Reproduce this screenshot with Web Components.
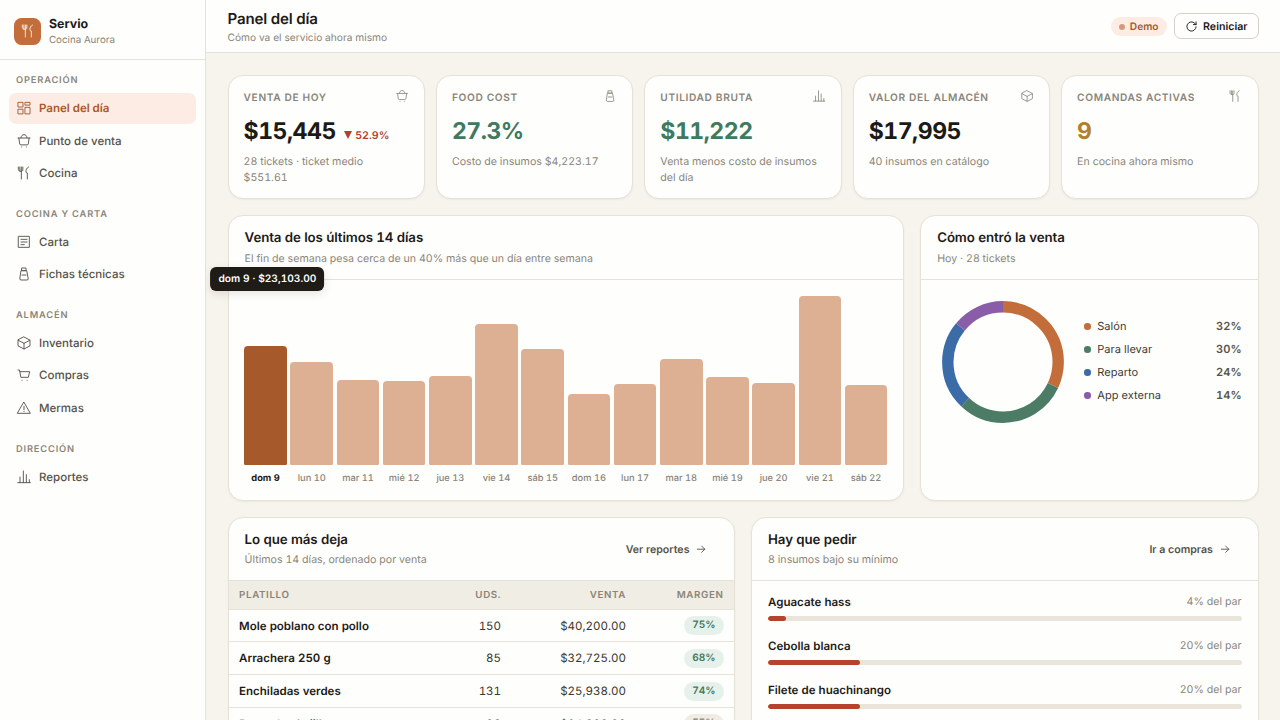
<!DOCTYPE html>
<html lang="es">
<head>
<meta charset="utf-8">
<title>Servio · Panel del día</title>
<style>
  html, body {
    margin: 0;
    height: 100%;
    overflow: hidden;
  }

  body {
    font-family: Inter, "Liberation Sans", sans-serif;
    text-rendering: geometricPrecision;
    --ink: #1c1a17;
    --ink-2: #57534a;
    --muted: #8a8579;
    --line: #e6e2d9;
    --bg: #f7f4ed;
    --card: #fefefd;
    --accent: #c26d3a;
    --accent-dark: #a8582b;
    --accent-soft: #fcece4;
    --green: #3f7a5f;
    --red: #b3402d;
    --gold: #b28028;
    color: var(--ink);
    background: var(--bg);
  }
</style>
</head>
<body>

<app-shell>
  <side-bar slot="side" name="Servio" place="Cocina Aurora">
    <nav-group label="Operación">
      <nav-item icon="grid" active>Panel del día</nav-item>
      <nav-item icon="basket">Punto de venta</nav-item>
      <nav-item icon="fork">Cocina</nav-item>
    </nav-group>
    <nav-group label="Cocina y carta">
      <nav-item icon="menu">Carta</nav-item>
      <nav-item icon="jar">Fichas técnicas</nav-item>
    </nav-group>
    <nav-group label="Almacén">
      <nav-item icon="box">Inventario</nav-item>
      <nav-item icon="cart">Compras</nav-item>
      <nav-item icon="alert">Mermas</nav-item>
    </nav-group>
    <nav-group label="Dirección">
      <nav-item icon="chart">Reportes</nav-item>
    </nav-group>
  </side-bar>

  <top-bar slot="top" heading="Panel del día" sub="Cómo va el servicio ahora mismo"></top-bar>

  <kpi-card slot="kpis" label="Venta de hoy" icon="basket" value="$15,445" delta="52.9%">28 tickets · ticket medio $551.61</kpi-card>
  <kpi-card slot="kpis" label="Food cost" icon="jar" value="27.3%" tone="green">Costo de insumos $4,223.17</kpi-card>
  <kpi-card slot="kpis" label="Utilidad bruta" icon="chart" value="$11,222" tone="green">Venta menos costo de insumos del día</kpi-card>
  <kpi-card slot="kpis" label="Valor del almacén" icon="box" value="$17,995">40 insumos en catálogo</kpi-card>
  <kpi-card slot="kpis" label="Comandas activas" icon="fork" value="9" tone="gold">En cocina ahora mismo</kpi-card>

  <panel-card slot="charts" heading="Venta de los últimos 14 días" sub="El fin de semana pesa cerca de un 40% más que un día entre semana">
    <bar-chart></bar-chart>
  </panel-card>
  <panel-card slot="charts" heading="Cómo entró la venta" sub="Hoy · 28 tickets">
    <donut-chart></donut-chart>
  </panel-card>

  <panel-card slot="lists" heading="Lo que más deja" sub="Últimos 14 días, ordenado por venta" action="Ver reportes" compact>
    <dish-table></dish-table>
  </panel-card>
  <panel-card slot="lists" heading="Hay que pedir" sub="8 insumos bajo su mínimo" action="Ir a compras" compact>
    <stock-list>
      <stock-item name="Aguacate hass" pct="4" fill="3.8"></stock-item>
      <stock-item name="Cebolla blanca" pct="20" fill="19.5"></stock-item>
      <stock-item name="Filete de huachinango" pct="20" fill="19.5"></stock-item>
    </stock-list>
  </panel-card>
</app-shell>

<script>
// attach an open shadow root from a markup string
function render(el, html) {
  const template = document.createElement('template');
  template.innerHTML = html;
  el.attachShadow({ mode: 'open' });
  el.shadowRoot.appendChild(template.content.cloneNode(true));
}

const ICONS = {
  grid: '<rect x="3.5" y="3.5" width="7" height="7"/><rect x="3.5" y="13.8" width="7" height="7"/><rect x="14" y="3.5" width="7" height="4.2"/><rect x="14" y="11" width="7" height="9.8"/>',
  basket: '<path d="M3 7.500h18M4.300 7.500l1.200 8.800a1.800 1.800 0 0 0 1.800 1.500h9.400a1.800 1.800 0 0 0 1.800-1.500l1.200-8.800M7.500 7.200C7.800 4.200 9.500 2.500 12 2.500s4.200 1.700 4.500 4.700"/><path d="M8.500 21h.1M15.500 21h.1"/>',
  fork: '<path d="M3.500 3v3.500c0 2 1.200 3 4.300 3M5.800 3v6M8 3v18M10.200 3v4.500c0 1.300-.8 2-2.200 2M18.800 3c-3 1.500-4.200 4.500-3.800 7.500.1 1 .8 1.500 2 1.500V21"/>',
  menu: '<rect x="4" y="3.500" width="16" height="16.500"/><path d="M7.500 8h9M7.500 12h9M7.500 16h5"/>',
  jar: '<path d="M9 3h6v4H9zM8 7h8l2.300 11.500a2 2 0 0 1-2 2.500H7.700a2 2 0 0 1-2-2.500zM9 13.500h6"/>',
  box: '<path d="M12 3l9 4.700v8.600L12 21l-9-4.700V7.700zM3.300 7.900L12 12.500l8.700-4.600M12 12.500V21"/>',
  cart: '<path d="M3 4.500h2.300l2 11h11.200L20.500 7H6"/><path d="M9 20h.1M16.500 20h.1"/>',
  alert: '<path d="M12 3.500L21.500 20h-19zM12 9.500v5M12 17v.3"/>',
  chart: '<path d="M2.500 20.500h19M6 20.500V12M11 20.500V3M15.500 20.500V8.500M20 20.500V16"/>',
  refresh: '<path d="M20.500 12.500a8.500 8.500 0 1 1-2.500-6.500L20.500 8.500M20.500 3.500v5h-5"/>',
  arrow: '<path d="M4.500 12h14.500M13 6l6 6-6 6"/>'
};

class UiIcon extends HTMLElement {
  constructor() {
    super();
    render(this, `
      <style>
        :host { display: inline-flex; flex: none; width: 16px; height: 16px; }
        svg {
          width: 100%;
          height: 100%;
          fill: none;
          stroke: currentColor;
          stroke-width: var(--icon-stroke, 1.4);
          stroke-linecap: round;
          stroke-linejoin: round;
        }
      </style>
      <svg viewBox="0 0 24 24">${ICONS[this.getAttribute('name')] || ''}</svg>
    `);
  }
}

class AppShell extends HTMLElement {
  constructor() {
    super();
    render(this, `
      <style>
        :host { display: flex; height: 100%; }
        .page { flex: 1; min-width: 0; display: flex; flex-direction: column; }
        main {
          flex: 1;
          min-height: 0;
          overflow: hidden;
          padding: 22px 21.500px 0 21.600px;
          display: flex;
          flex-direction: column;
          gap: 16.400px;
        }
        .kpis { display: grid; grid-template-columns: repeat(5, 1fr); gap: 11px; height: 124px; flex: none; }
        .charts { display: grid; grid-template-columns: 2fr 1fr; gap: 16px; height: 285.500px; flex: none; }
        .lists { display: grid; grid-template-columns: 1fr 1fr; gap: 16px; height: 320px; flex: none; }
      </style>
      <slot name="side"></slot>
      <div class="page">
        <slot name="top"></slot>
        <main>
          <div class="kpis"><slot name="kpis"></slot></div>
          <div class="charts"><slot name="charts"></slot></div>
          <div class="lists"><slot name="lists"></slot></div>
        </main>
      </div>
    `);
  }
}

class SideBar extends HTMLElement {
  constructor() {
    super();
    render(this, `
      <style>
        :host {
          display: flex;
          flex-direction: column;
          flex: none;
          box-sizing: border-box;
          width: 206px;
          background: var(--card);
          border-right: 1px solid var(--line);
        }
        .brand {
          display: flex;
          align-items: center;
          gap: 8px;
          box-sizing: border-box;
          height: 59.500px;
          padding: 4px 14px 0;
          border-bottom: 1px solid var(--line);
        }
        .logo {
          display: flex;
          align-items: center;
          justify-content: center;
          width: 27px;
          height: 27px;
          border-radius: 7.500px;
          color: #fbeee6;
          background: var(--accent);
        }
        .name { margin-top: 2px; font-size: 12.400px; font-weight: 700; line-height: 16px; }
        .place { margin-top: 1px; font-size: 9.750px; line-height: 16px; color: var(--muted); }
        nav { padding: 12.500px 9px 0; }
      </style>
      <div class="brand">
        <div class="logo"><ui-icon name="fork"></ui-icon></div>
        <div>
          <div class="name">${this.getAttribute('name')}</div>
          <div class="place">${this.getAttribute('place')}</div>
        </div>
      </div>
      <nav><slot></slot></nav>
    `);
  }
}

class NavGroup extends HTMLElement {
  constructor() {
    super();
    render(this, `
      <style>
        :host { display: flex; flex-direction: column; gap: 1.200px; margin-bottom: 16.800px; }
        .label {
          padding: 1.200px 7px 2.200px;
          font-size: 9.300px;
          font-weight: 600;
          line-height: 16px;
          letter-spacing: 0.09em;
          text-transform: uppercase;
          color: var(--muted);
        }
      </style>
      <div class="label">${this.getAttribute('label')}</div>
      <slot></slot>
    `);
  }
}

class NavItem extends HTMLElement {
  constructor() {
    super();
    render(this, `
      <style>
        :host {
          display: flex;
          align-items: center;
          gap: 7px;
          height: 31.300px;
          padding: 0 7px;
          border-radius: 7px;
          font-size: 11.520px;
          font-weight: 500;
          color: var(--ink-2);
        }
        :host([active]) { color: var(--accent-dark); background: var(--accent-soft); font-weight: 600; }
      </style>
      <ui-icon name="${this.getAttribute('icon')}"></ui-icon>
      <span><slot></slot></span>
    `);
  }
}

class TopBar extends HTMLElement {
  constructor() {
    super();
    render(this, `
      <style>
        :host {
          display: flex;
          align-items: center;
          flex: none;
          box-sizing: border-box;
          height: 53px;
          padding: 0 21.500px;
          background: var(--card);
          border-bottom: 1px solid var(--line);
        }
        .titles { flex: 1; }
        .heading { margin-top: 2px; font-size: 15.070px; font-weight: 600; line-height: 20px; letter-spacing: -0.01em; }
        .sub { font-size: 10.190px; line-height: 16px; margin-top: 1px; color: var(--muted); }
        .pill {
          display: flex;
          align-items: center;
          gap: 5px;
          box-sizing: border-box;
          height: 19.500px;
          margin-top: 0.500px;
          padding: 0.500px 8px 0;
          border-radius: 10px;
          font-size: 10.190px;
          font-weight: 600;
          color: var(--accent-dark);
          background: var(--accent-soft);
        }
        .dot { width: 6px; height: 6px; border-radius: 50%; background: #d49a7c; }
        button {
          display: flex;
          align-items: center;
          gap: 5.500px;
          box-sizing: border-box;
          height: 26px;
          margin: 0 0 0 7.500px;
          padding: 1px 10px 0 9.500px;
          border: 1px solid #d6d1c6;
          border-radius: 7px;
          font: 600 10.630px Inter, sans-serif;
          text-rendering: inherit;
          color: var(--ink);
          background: var(--card);
        }
        button ui-icon { width: 13px; height: 13px; --icon-stroke: 1.700; }
      </style>
      <div class="titles">
        <div class="heading">${this.getAttribute('heading')}</div>
        <div class="sub">${this.getAttribute('sub')}</div>
      </div>
      <div class="pill"><span class="dot"></span>Demo</div>
      <button><ui-icon name="refresh"></ui-icon>Reiniciar</button>
    `);
  }
}

class KpiCard extends HTMLElement {
  constructor() {
    super();
    const delta = this.getAttribute('delta');
    render(this, `
      <style>
        :host {
          display: block;
          box-sizing: border-box;
          padding: 13px 15px 0;
          border: 1px solid var(--line);
          border-radius: 15px;
          background: var(--card);
          box-shadow: 0 1px 2px rgba(60, 50, 30, 0.06);
          font-variant-numeric: tabular-nums;
        }
        .top { display: flex; justify-content: space-between; height: 20px; color: var(--muted); }
        .label {
          font-size: 10.190px;
          font-weight: 600;
          line-height: 18.400px;
          letter-spacing: 0.06em;
          text-transform: uppercase;
          white-space: nowrap;
        }
        .top ui-icon { width: 14.200px; height: 14.200px; --icon-stroke: 1.400; }
        .row { display: flex; align-items: baseline; gap: 8px; }
        .value { font-size: 23.040px; font-weight: 700; line-height: 44px; letter-spacing: -0.022em; }
        :host([tone="green"]) .value { color: var(--green); }
        :host([tone="gold"]) .value { color: var(--gold); }
        .delta { display: flex; align-items: center; gap: 3.400px; font-size: 10.630px; font-weight: 600; color: var(--red); }
        .delta i { border: 4.300px solid transparent; border-top: 8px solid var(--red); border-bottom: 0; }
        .note { margin-top: 0.700px; font-size: 10.630px; line-height: 16px; color: var(--muted); }
      </style>
      <div class="top">
        <span class="label">${this.getAttribute('label')}</span>
        <ui-icon name="${this.getAttribute('icon')}"></ui-icon>
      </div>
      <div class="row">
        <span class="value">${this.getAttribute('value')}</span>
        ${delta ? `<span class="delta"><i></i>${delta}</span>` : ''}
      </div>
      <div class="note"><slot></slot></div>
    `);
  }
}

class PanelCard extends HTMLElement {
  constructor() {
    super();
    const action = this.getAttribute('action');
    render(this, `
      <style>
        :host {
          display: flex;
          flex-direction: column;
          box-sizing: border-box;
          min-width: 0;
          border: 1px solid var(--line);
          border-radius: 15px;
          background: var(--card);
          box-shadow: 0 1px 2px rgba(60, 50, 30, 0.06);
        }
        header {
          display: flex;
          align-items: center;
          box-sizing: border-box;
          height: 63.500px;
          padding: 0 16px;
          border-bottom: 1px solid var(--line);
        }
        :host([compact]) header { height: 62.800px; }
        .titles { flex: 1; font-variant-numeric: tabular-nums; }
        .heading { font-size: 13.300px; font-weight: 600; line-height: 20px; letter-spacing: -0.008em; }
        .sub { font-size: 10.630px; line-height: 16px; margin-top: 2.400px; color: var(--muted); }
        :host([compact]) .sub { margin-top: 1.400px; }
        .action {
          display: flex;
          align-items: center;
          gap: 6px;
          padding-right: 10.200px;
          font-size: 10.630px;
          font-weight: 600;
          color: var(--ink-2);
        }
        .action ui-icon { width: 12.400px; height: 12.400px; --icon-stroke: 1.800; }
      </style>
      <header>
        <div class="titles">
          <div class="heading">${this.getAttribute('heading')}</div>
          <div class="sub">${this.getAttribute('sub')}</div>
        </div>
        ${action ? `<div class="action">${action}<ui-icon name="arrow"></ui-icon></div>` : ''}
      </header>
      <slot></slot>
    `);
  }
}

// label + bar height in px
const DAYS = [
  ['dom 9', 119], ['lun 10', 103], ['mar 11', 85.3], ['mié 12', 83.5], ['jue 13', 88.7],
  ['vie 14', 140.5], ['sáb 15', 115.5], ['dom 16', 71], ['lun 17', 80.7], ['mar 18', 105.7],
  ['mié 19', 87.7], ['jue 20', 81.5], ['vie 21', 168.7], ['sáb 22', 79.7]
];

class BarChart extends HTMLElement {
  constructor() {
    super();
    const cols = DAYS.map(([day, h], i) => `
      <div class="col${i === 0 ? ' on' : ''}">
        <div class="plot"><div class="bar" style="height:${h}px"></div></div>
        <span class="day">${day}</span>
        ${i === 0 ? '<div class="tip">dom 9 · $23,103.00</div>' : ''}
      </div>`).join('');
    render(this, `
      <style>
        :host { display: flex; gap: 3.550px; padding: 16px 15.800px 0 15.700px; font-variant-numeric: tabular-nums; }
        .col { position: relative; flex: 1; min-width: 0; }
        .plot { display: flex; align-items: flex-end; height: 169px; }
        .bar { flex: 1; border-radius: 4px 4px 1.500px 1.500px; background: #ddaf93; }
        .on .bar { background: #a65a2b; }
        .day {
          display: block;
          margin-top: 6px;
          font-size: 9.300px;
          font-weight: 500;
          line-height: 16px;
          text-align: center;
          white-space: nowrap;
          color: var(--muted);
        }
        .on .day { font-weight: 700; color: var(--ink); }
        .tip {
          position: absolute;
          left: 50%;
          bottom: calc(100% + 5.400px);
          transform: translateX(-50%);
          margin-left: 1.800px;
          padding: 0 8px;
          border-radius: 6px;
          font-size: 10.190px;
          font-weight: 600;
          line-height: 24px;
          white-space: nowrap;
          color: #fff;
          background: #1f1c18;
          box-shadow: 0 3px 8px rgba(60, 50, 30, 0.120);
        }
      </style>
      ${cols}
    `);
  }
}

const CHANNELS = [
  ['Salón', 32, '#c26d3a'],
  ['Para llevar', 30, '#4d7c66'],
  ['Reparto', 24, '#3c6ca8'],
  ['App externa', 14, '#8a5da9']
];

class DonutChart extends HTMLElement {
  constructor() {
    super();
    let start = 0;
    const arcs = CHANNELS.map(([, pct, color]) => {
      const arc = `<circle cx="61" cy="61" r="55.2" pathLength="100" stroke="${color}" stroke-dasharray="${pct} ${100 - pct}" stroke-dashoffset="${-start}"/>`;
      start += pct;
      return arc;
    }).join('');
    const rows = CHANNELS.map(([name, pct, color]) => `
      <li><i style="background:${color}"></i><span>${name}</span><b>${pct}%</b></li>`).join('');
    render(this, `
      <style>
        :host { display: flex; align-items: center; gap: 20.500px; padding: 21px 16px 0 20.800px; }
        svg { flex: none; width: 122px; height: 122px; transform: rotate(-90deg); fill: none; stroke-width: 11.400; }
        ul { flex: 1; display: flex; flex-direction: column; margin: 0; padding: 0 0 1.800px; list-style: none; }
        li { display: flex; align-items: center; height: 23px; font-size: 11.070px; color: #3f3c35; }
        i { width: 6.600px; height: 6.600px; margin-right: 6.200px; border-radius: 50%; }
        span { flex: 1; }
        b { font-weight: 600; color: var(--ink-2); font-variant-numeric: tabular-nums; }
      </style>
      <svg viewBox="0 0 122 122">${arcs}</svg>
      <ul>${rows}</ul>
    `);
  }
}

const DISHES = [
  ['Mole poblano con pollo', '150', '$40,200.00', '75%'],
  ['Arrachera 250 g', '85', '$32,725.00', '68%'],
  ['Enchiladas verdes', '131', '$25,938.00', '74%'],
  ['Pescado al ajillo', '96', '$24,000.00', '55%', 'low']
];

class DishTable extends HTMLElement {
  constructor() {
    super();
    const rows = DISHES.map(([name, units, sale, margin, level]) => `
      <div class="row">
        <b>${name}</b><span>${units}</span><span>${sale}</span>
        <span><em class="${level || ''}">${margin}</em></span>
      </div>`).join('');
    render(this, `
      <style>
        :host { display: block; font-variant-numeric: tabular-nums; }
        .row, .head {
          display: grid;
          grid-template-columns: 1fr 90px 125px 97.500px;
          align-items: center;
          box-sizing: border-box;
          height: 32.900px;
          border-bottom: 1px solid var(--line);
          font-size: 11.520px;
          color: #3a372f;
        }
        .head {
          height: 28.500px;
          padding-top: 1px;
          font-size: 9.750px;
          font-weight: 600;
          letter-spacing: 0.065em;
          text-transform: uppercase;
          color: var(--muted);
          background: #f0ede4;
        }
        .row > *, .head > * { padding: 0 10.500px; text-align: right; }
        .row > b, .head > :first-child { text-align: left; }
        b { font-weight: 600; color: var(--ink); }
        em {
          display: inline-block;
          padding: 0 8px;
          border-radius: 10px;
          font-style: normal;
          font-size: 10.190px;
          font-weight: 600;
          line-height: 19.500px;
          color: var(--green);
          background: #e7f1ec;
        }
        em.low { color: var(--muted); background: #efece3; }
      </style>
      <div class="head"><span>Platillo</span><span>Uds.</span><span>Venta</span><span>Margen</span></div>
      ${rows}
    `);
  }
}

class StockList extends HTMLElement {
  constructor() {
    super();
    render(this, `
      <style>
        :host { display: flex; flex-direction: column; gap: 16.500px; padding: 13px 16px 0; }
      </style>
      <slot></slot>
    `);
  }
}

class StockItem extends HTMLElement {
  constructor() {
    super();
    render(this, `
      <style>
        :host { display: block; height: 27.300px; font-variant-numeric: tabular-nums; }
        .line { display: flex; justify-content: space-between; height: 22px; line-height: 16px; }
        b { font-size: 11.520px; font-weight: 600; }
        span { font-size: 10.630px; color: var(--muted); }
        .track { height: 5.300px; border-radius: 3px; overflow: hidden; background: #eae5db; }
        .fill { height: 100%; width: ${this.getAttribute('fill')}%; border-radius: 3px; background: #b5432f; }
      </style>
      <div class="line"><b>${this.getAttribute('name')}</b><span>${this.getAttribute('pct')}% del par</span></div>
      <div class="track"><div class="fill"></div></div>
    `);
  }
}

customElements.define('ui-icon', UiIcon);
customElements.define('app-shell', AppShell);
customElements.define('side-bar', SideBar);
customElements.define('nav-group', NavGroup);
customElements.define('nav-item', NavItem);
customElements.define('top-bar', TopBar);
customElements.define('kpi-card', KpiCard);
customElements.define('panel-card', PanelCard);
customElements.define('bar-chart', BarChart);
customElements.define('donut-chart', DonutChart);
customElements.define('dish-table', DishTable);
customElements.define('stock-list', StockList);
customElements.define('stock-item', StockItem);
</script>
</body>
</html>
